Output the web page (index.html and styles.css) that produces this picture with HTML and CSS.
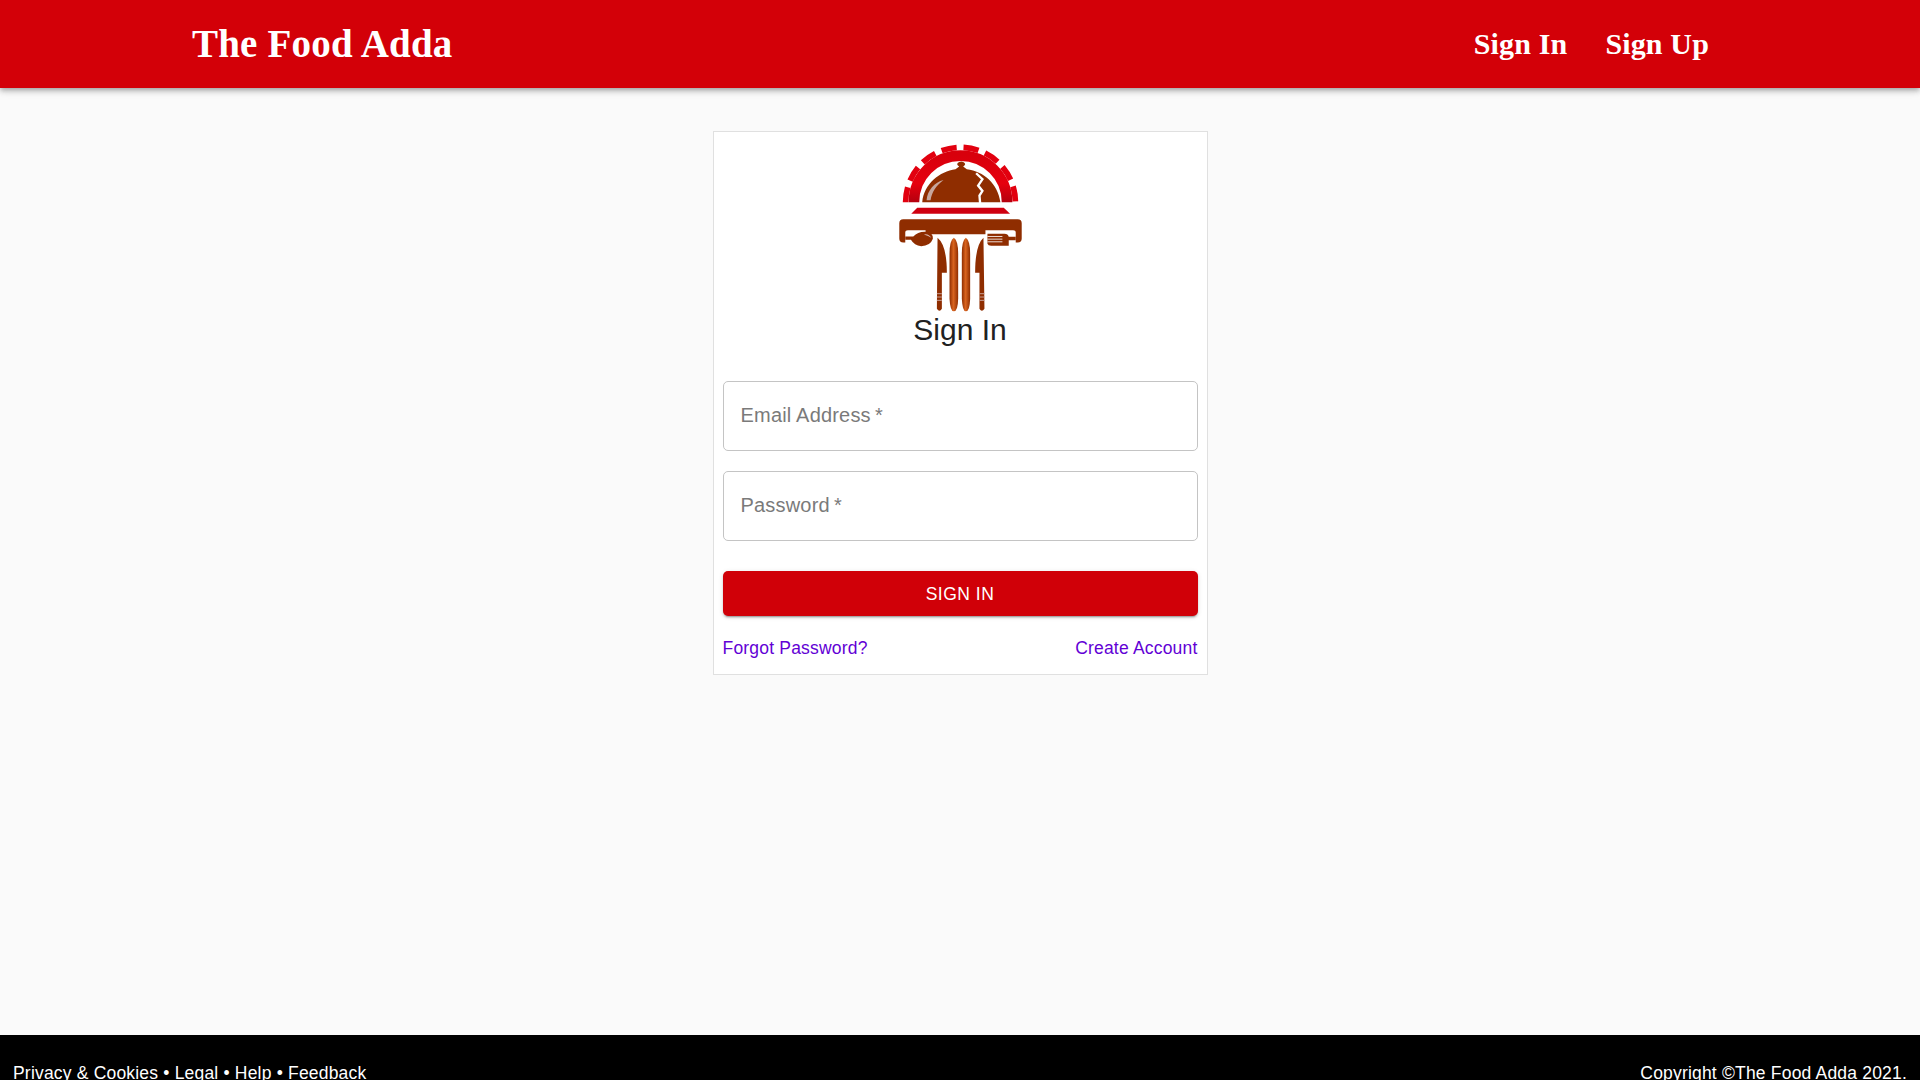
FILE: index.html
```html
<!DOCTYPE html>
<html lang="en">
<head>
<meta charset="utf-8">
<title>The Food Adda</title>
<link rel="stylesheet" href="styles.css">
</head>
<body>
<header class="topbar">
  <a class="brand" href="#">The Food Adda</a>
  <nav class="topnav">
    <a href="#">Sign In</a>
    <a href="#">Sign Up</a>
  </nav>
</header>
<main class="page">
  <section class="card">
    <svg class="logo" viewBox="110 40 380 505" aria-hidden="true">
      <defs>
        <linearGradient id="gear" x1="0" y1="0" x2="0" y2="1">
          <stop offset="0" stop-color="#d8000c"/>
          <stop offset="0.6" stop-color="#e6000f"/>
          <stop offset="1" stop-color="#b4000e"/>
        </linearGradient>
        <linearGradient id="blade" x1="0" y1="0" x2="1" y2="0">
          <stop offset="0" stop-color="#8f2d00"/>
          <stop offset="0.45" stop-color="#d9641f"/>
          <stop offset="1" stop-color="#8f2d00"/>
        </linearGradient>
      </defs>
      <path d="M160 215A140 140 0 0 1 440 215" fill="none" stroke="url(#gear)" stroke-width="32"/>
      <path d="M135 215A165 165 0 0 1 465 215" fill="none" stroke="#e2000f" stroke-width="17" stroke-dasharray="46 21"/>
      <path d="M185 215C190 160 238 122 285 116L296 108Q284 100 296 94Q302 91 308 94Q320 100 308 108L319 116C370 122 412 160 420 215Z" fill="#8f2d00"/>
      <path d="M347 128L366 146L353 165L366 181L357 195L359 218" fill="none" stroke="#fff" stroke-width="7"/>
      <path d="M198 209C200 180 222 154 249 148C226 165 214 184 210 209Z" fill="#c7a69c"/>
      <path d="M152 250L170 232H430L449 250Z" fill="#cf0010"/>
      <path d="M128 266H472Q484 266 484 278V324Q484 336 472 336H466V306Q466 299 458 299H375V311H195V299H142Q134 299 134 306V336H128Q116 336 116 324V278Q116 266 128 266Z" fill="#8f2d00"/>
      <path d="M134 318H158Q172 303 195 304Q219 307 217 325Q209 347 182 347Q161 345 151 328H134Z" fill="#8f2d00"/>
      <path d="M190 312Q204 308 212 322Q204 316 190 312Z" fill="#d9b8ae"/>
      <path d="M381 310H432Q443 310 445 319H466V329H445V346H392Q383 346 381 340Z" fill="#8f2d00"/>
      <path d="M381 318H426M381 326H426M381 334H426" stroke="#fff" stroke-width="2.5"/>
      <path d="M231 322Q259 345 259 427H244V535Q237 547 229 535Z" fill="#8f2d00"/>
      <path d="M369 322Q344 345 344 427H357V535Q364 547 372 535Z" fill="#8f2d00"/>
      <path d="M229 490H244M229 500H244M229 510H244M357 490H372M357 500H372M357 510H372" stroke="#c9a097" stroke-width="3"/>
      <path d="M280 322Q267 330 267 370V505Q269 543 280 543Q292 543 293 505V370Q293 330 280 322Z" fill="url(#blade)"/>
      <path d="M316 322Q304 330 304 370V505Q306 543 316 543Q328 543 329 505V370Q329 330 316 322Z" fill="url(#blade)"/>
    </svg>
    <h1 class="title">Sign In</h1>
    <form class="form">
      <input class="field" type="email" placeholder="Email Address&#8201;*">
      <input class="field" type="password" placeholder="Password&#8201;*">
      <button class="submit" type="button">Sign In</button>
      <div class="links">
        <a href="#">Forgot Password?</a>
        <a href="#">Create Account</a>
      </div>
    </form>
  </section>
</main>
<footer class="footer">
  <div class="legal"><a href="#">Privacy &amp; Cookies</a> • <a href="#">Legal</a> • <a href="#">Help</a> • <a href="#">Feedback</a></div>
  <div>Copyright ©The Food Adda 2021.</div>
</footer>
</body>
</html>
```
FILE: styles.css
```css
html, body {
  margin: 0;
  background: #fafafa;
  font-family: "Liberation Sans", Arial, sans-serif;
  overflow: hidden;
  height: 100%;
}

a {
  color: inherit;
  text-decoration: none;
}

.topbar {
  height: 88px;
  box-sizing: border-box;
  background: #d30008;
  color: #fff;
  display: flex;
  align-items: center;
  justify-content: space-between;
  padding: 0 211px 0 192px;
  font-family: "Liberation Serif", "Times New Roman", serif;
  font-weight: 700;
  box-shadow: 0 2px 4px -1px rgba(0, 0, 0, 0.2), 0 4px 5px 0 rgba(0, 0, 0, 0.14), 0 1px 10px 0 rgba(0, 0, 0, 0.12);
  position: relative;
}

.brand {
  font-size: 39px;
  letter-spacing: 0.2px;
  margin-bottom: 2px;
}

.topnav {
  display: flex;
  gap: 38px;
  font-size: 30px;
  letter-spacing: 0.15px;
}

.page {
  height: 947px;
  box-sizing: border-box;
  padding-top: 43px;
  display: flex;
  justify-content: center;
  align-items: flex-start;
}

.card {
  width: 495px;
  height: 544px;
  box-sizing: border-box;
  background: #fff;
  border: 1px solid #e0e0e0;
  padding: 12px 9px 0;
  display: flex;
  flex-direction: column;
  align-items: center;
}

.logo {
  width: 127px;
  height: 168px;
  display: block;
}

.title {
  margin: 0;
  font-size: 30px;
  font-weight: 400;
  line-height: 36px;
  color: #212121;
}

.form {
  align-self: stretch;
  margin-top: 33px;
  display: flex;
  flex-direction: column;
}

.field {
  height: 70px;
  box-sizing: border-box;
  border: 1px solid #c4c4c4;
  border-radius: 5px;
  padding: 0 17px 1px;
  margin-bottom: 20px;
  background: #fff;
  font: 20px "Liberation Sans", Arial, sans-serif;
  letter-spacing: 0.19px;
}

.field::placeholder {
  color: #7a7a7a;
  opacity: 1;
}

.submit {
  height: 45px;
  margin-top: 10px;
  padding-top: 2px;
  border: 0;
  border-radius: 5px;
  background: #d00008;
  color: #fff;
  font: 17.5px "Liberation Sans", Arial, sans-serif;
  letter-spacing: 0.5px;
  text-transform: uppercase;
  box-shadow: 0 3px 1px -2px rgba(0, 0, 0, 0.2), 0 2px 2px 0 rgba(0, 0, 0, 0.14), 0 1px 5px 0 rgba(0, 0, 0, 0.12);
}

.links {
  margin-top: 21px;
  display: flex;
  justify-content: space-between;
  color: #6200d5;
  font-size: 17.5px;
  letter-spacing: 0.19px;
  line-height: 22px;
}

.footer {
  height: 100px;
  box-sizing: border-box;
  background: #000;
  color: #fff;
  display: flex;
  justify-content: space-between;
  padding: 27px 13px 0;
  font-size: 17.5px;
  letter-spacing: 0.19px;
  line-height: 22px;
}
```
